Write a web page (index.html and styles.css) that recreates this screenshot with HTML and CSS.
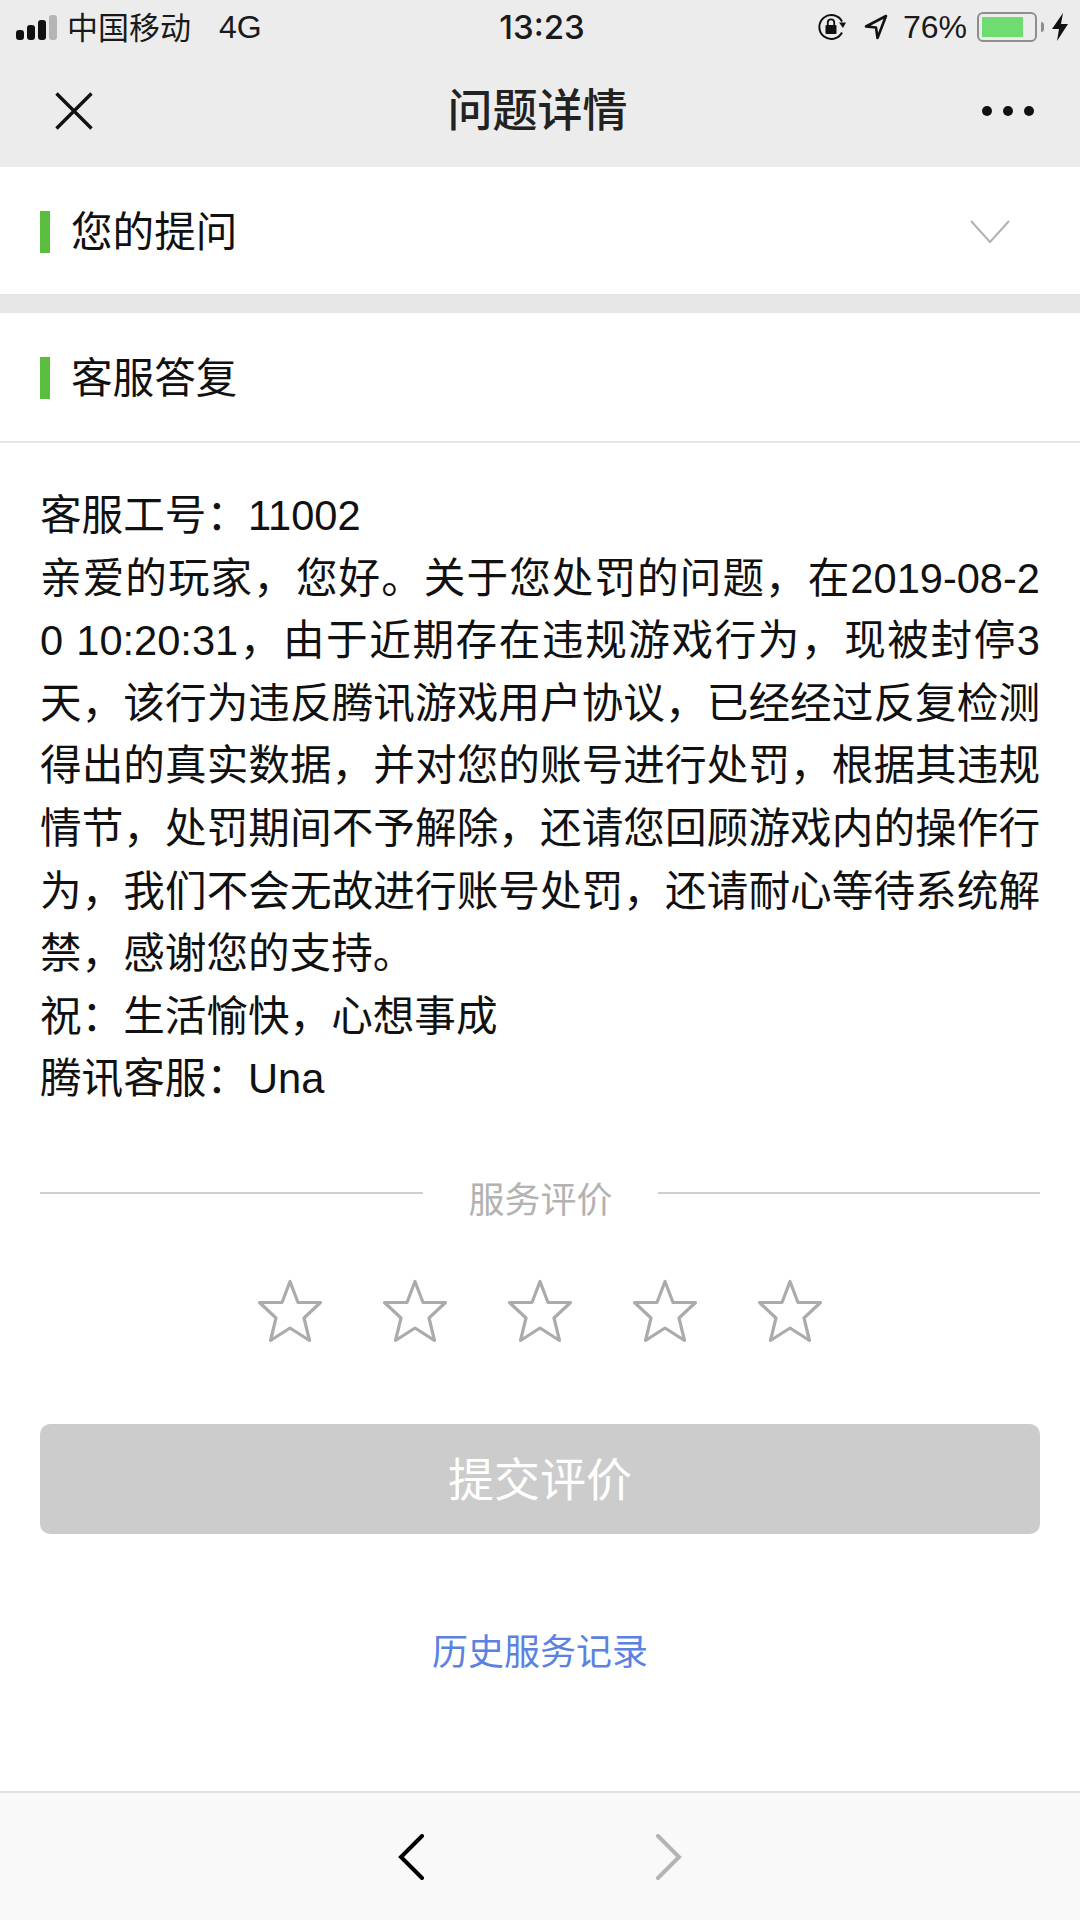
FILE: index.html
```html
<!DOCTYPE html>
<html lang="zh-CN">
<head>
    <meta charset="UTF-8">
    <meta name="viewport" content="width=device-width, initial-scale=1.0">
    <title>问题详情</title>
    <link rel="stylesheet" href="styles.css">
</head>
<body>
    <div class="page">
        <header class="top-bar">
            <div class="status-bar">
                <div class="status-left">
                    <div class="signal">
                        <span class="signal-bar bar-1"></span>
                        <span class="signal-bar bar-2"></span>
                        <span class="signal-bar bar-3"></span>
                        <span class="signal-bar bar-4"></span>
                    </div>
                    <span class="carrier">中国移动</span>
                    <span class="network">4G</span>
                </div>
                <div class="status-time">13:23</div>
                <div class="status-right">
                    <svg class="icon-lock" width="30" height="28" viewBox="0 0 30 28">
                        <path d="M25 8.5A12 12 0 1 0 25 19.5" fill="none" stroke="#111" stroke-width="2"/>
                        <path d="M22 9.5L29 9.5L26 15Z" fill="#111"/>
                        <rect x="8.5" y="12" width="11" height="9" rx="1" fill="#111"/>
                        <path d="M10.8 12V9.5a3.2 3.2 0 0 1 6.4 0V12" fill="none" stroke="#111" stroke-width="1.8"/>
                    </svg>
                    <svg class="icon-location" width="24" height="26" viewBox="0 0 24 26">
                        <path d="M22 2L2 12.5L12 13.5L13.5 24Z" fill="none" stroke="#111" stroke-width="2.6" stroke-linejoin="round"/>
                    </svg>
                    <span class="battery-text">76%</span>
                    <div class="battery">
                        <div class="battery-fill"></div>
                    </div>
                    <span class="battery-nub"></span>
                    <svg class="icon-bolt" width="16" height="28" viewBox="0 0 16 28">
                        <path d="M11 0L0 16H7L5 28L16 11H9Z" fill="#111"/>
                    </svg>
                </div>
            </div>
            <div class="nav-bar">
                <svg class="nav-close" width="38" height="38" viewBox="0 0 38 38">
                    <path d="M1.5 1.5L36.5 36.5M36.5 1.5L1.5 36.5" stroke="#111" stroke-width="3.4" fill="none"/>
                </svg>
                <div class="nav-title">问题详情</div>
                <div class="nav-more">
                    <span class="dot"></span>
                    <span class="dot"></span>
                    <span class="dot"></span>
                </div>
            </div>
        </header>

        <section class="section-head section-question">
            <div class="section-title">您的提问</div>
            <svg class="chevron-down" width="40" height="24" viewBox="0 0 40 24">
                <path d="M1 1L20 22L39 1" fill="none" stroke="#b2b2b2" stroke-width="2"/>
            </svg>
        </section>

        <main class="content">
            <section class="section-head section-answer">
                <div class="section-title">客服答复</div>
            </section>

            <div class="answer-text">
                <p>客服工号：11002</p>
                <p>亲爱的玩家，您好。关于您处罚的问题，在2019-08-20 10:20:31，由于近期存在违规游戏行为，现被封停3天，该行为违反腾讯游戏用户协议，已经经过反复检测得出的真实数据，并对您的账号进行处罚，根据其违规情节，处罚期间不予解除，还请您回顾游戏内的操作行为，我们不会无故进行账号处罚，还请耐心等待系统解禁，感谢您的支持。</p>
                <p>祝：生活愉快，心想事成</p>
                <p>腾讯客服：Una</p>
            </div>

            <div class="rating-title">
                <span class="rating-line"></span>
                <span class="rating-label">服务评价</span>
                <span class="rating-line"></span>
            </div>

            <div class="stars">
                <svg class="star" width="66" height="64" viewBox="0 0 66 64"><path d="M33 2.5L41 23.5H63.5L47 39L52.5 61.5L33 49L13.5 61.5L19 39L2.5 23.5H25Z"/></svg>
                <svg class="star" width="66" height="64" viewBox="0 0 66 64"><path d="M33 2.5L41 23.5H63.5L47 39L52.5 61.5L33 49L13.5 61.5L19 39L2.5 23.5H25Z"/></svg>
                <svg class="star" width="66" height="64" viewBox="0 0 66 64"><path d="M33 2.5L41 23.5H63.5L47 39L52.5 61.5L33 49L13.5 61.5L19 39L2.5 23.5H25Z"/></svg>
                <svg class="star" width="66" height="64" viewBox="0 0 66 64"><path d="M33 2.5L41 23.5H63.5L47 39L52.5 61.5L33 49L13.5 61.5L19 39L2.5 23.5H25Z"/></svg>
                <svg class="star" width="66" height="64" viewBox="0 0 66 64"><path d="M33 2.5L41 23.5H63.5L47 39L52.5 61.5L33 49L13.5 61.5L19 39L2.5 23.5H25Z"/></svg>
            </div>

            <button class="submit-button" disabled>提交评价</button>

            <a class="history-link">历史服务记录</a>
        </main>

        <footer class="bottom-bar">
            <svg width="26" height="46" viewBox="0 0 26 46">
                <path d="M24 2L3 23L24 44" fill="none" stroke="#000" stroke-width="4" stroke-linecap="round"/>
            </svg>
            <svg width="26" height="46" viewBox="0 0 26 46">
                <path d="M2 2L23 23L2 44" fill="none" stroke="#b4b4b4" stroke-width="4" stroke-linecap="round"/>
            </svg>
        </footer>
    </div>
</body>
</html>
```

FILE: styles.css
```css
* {
    box-sizing: border-box;
}

body {
    margin: 0;
    padding: 0;
    background: #fff;
    color: #111;
    font-family: "Liberation Sans", "Noto Sans CJK SC", sans-serif;
}

.page {
    width: 1080px;
    height: 1920px;
    display: flex;
    flex-direction: column;
    overflow: hidden;
}

.top-bar {
    height: 167px;
    background: #ececec;
    flex-shrink: 0;
}

.status-bar {
    height: 54px;
    padding: 0 12px 0 16px;
    display: grid;
    grid-template-columns: 1fr auto 1fr;
    align-items: center;
    font-size: 32px;
    color: #1a1a1a;
}

.status-left {
    display: flex;
    align-items: center;
}

.signal {
    display: flex;
    align-items: flex-end;
    gap: 3px;
    height: 25px;
    margin-right: 10px;
}

.signal-bar {
    width: 8px;
    border-radius: 3px;
    background: #111;
}

.bar-1 { height: 10px; }
.bar-2 { height: 15px; }
.bar-3 { height: 20px; }
.bar-4 { height: 25px; background: #b5b5b5; }

.carrier {
    margin-top: -3px;
    font-size: 31px;
}

.network {
    margin-left: 28px;
}

.status-time {
    font-family: Inter, "Liberation Sans", sans-serif;
    font-weight: 500;
    font-size: 33px;
}

.status-right {
    display: flex;
    align-items: center;
    justify-content: flex-end;
}

.icon-location {
    margin-left: 17px;
}

.battery-text {
    margin-left: 15px;
}

.battery {
    width: 60px;
    height: 30px;
    margin-left: 10px;
    padding: 3px;
    border: 2px solid #8e8e8e;
    border-radius: 6px;
}

.battery-fill {
    width: 41px;
    height: 100%;
    background: #6fdc72;
}

.battery-nub {
    width: 3px;
    height: 10px;
    margin-left: 4px;
    background: #8e8e8e;
    border-radius: 0 3px 3px 0;
}

.icon-bolt {
    margin-left: 8px;
}

.nav-bar {
    height: 113px;
    padding: 0 46px 0 55px;
    display: flex;
    align-items: center;
    justify-content: space-between;
}

.nav-title {
    font-size: 45px;
    font-weight: 500;
    color: #222;
    padding-bottom: 7px;
}

.nav-more {
    display: flex;
    gap: 11px;
}

.dot {
    width: 10px;
    height: 10px;
    border-radius: 50%;
    background: #111;
}

.section-head {
    display: flex;
    align-items: center;
    justify-content: space-between;
    padding: 2px 70px 0 40px;
    background: #fff;
}

.section-question {
    height: 128px;
    flex-shrink: 0;
    border-bottom: 1px solid #e4e4e4;
}

.section-answer {
    height: 130px;
    border-bottom: 2px solid #e6e6e6;
}

.section-title {
    border-left: 10px solid #5abd3e;
    padding-left: 21px;
    height: 42px;
    line-height: 44px;
    font-size: 41.6px;
    color: #111;
}

.content {
    flex: 1;
    margin-top: 18px;
    display: flex;
    flex-direction: column;
    background: #fff;
    box-shadow: 0 -18px 0 #e6e6e6;
}

.answer-text {
    padding: 42px 40px 0;
    font-size: 41.6px;
    line-height: 62.6px;
    word-break: break-all;
    text-align: justify;
    color: #111;
}

.answer-text p {
    margin: 0;
}

.rating-title {
    margin: 71px 40px 0;
    height: 36px;
    display: flex;
    align-items: flex-start;
}

.rating-line {
    flex: 1;
    height: 2px;
    margin-top: 10px;
    background: #cfcfcf;
}

.rating-label {
    margin: -3px 46px 0;
    font-size: 36px;
    line-height: 44px;
    color: #b2b2b2;
    width: 143px;
    white-space: nowrap;
}

.stars {
    margin-top: 61px;
    display: flex;
    justify-content: center;
    gap: 59px;
}

.star {
    fill: none;
    stroke: #ababab;
    stroke-width: 3.2;
    stroke-linejoin: round;
}

.submit-button {
    margin: 81px 40px 0;
    padding: 0 0 6px;
    height: 110px;
    flex-shrink: 0;
    border: none;
    border-radius: 10px;
    background: #cccccc;
    color: #fff;
    font-family: inherit;
    font-size: 46px;
}

.history-link {
    margin-top: 97px;
    text-align: center;
    font-size: 36px;
    line-height: 44px;
    color: #5b82e0;
}

.bottom-bar {
    height: 129px;
    flex-shrink: 0;
    background: #f9f9f9;
    border-top: 2px solid #e2e2e2;
    display: flex;
    justify-content: center;
    align-items: center;
    gap: 232px;
}
```
